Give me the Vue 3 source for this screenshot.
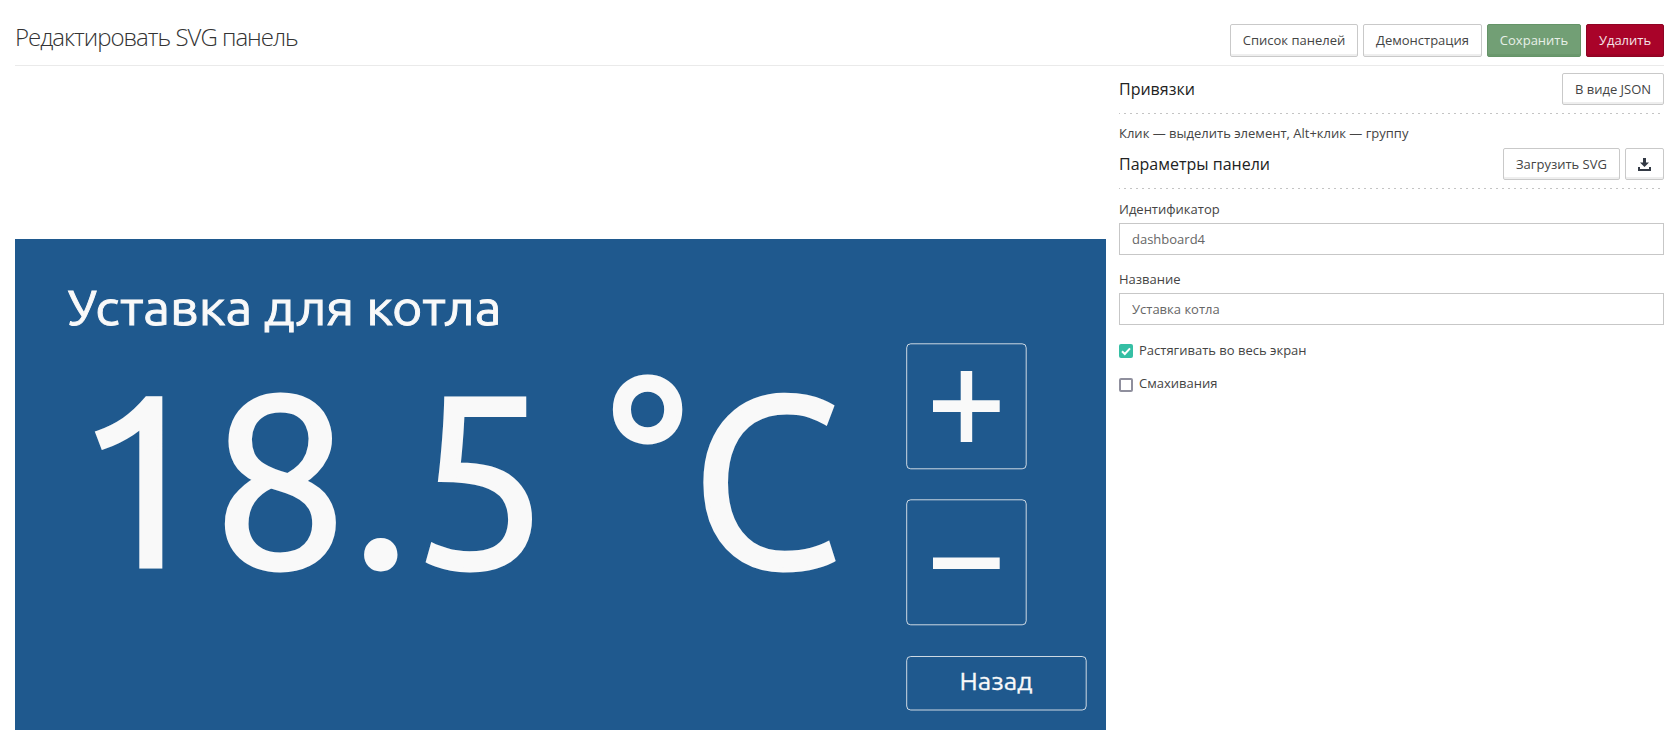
<script setup>
import { ref } from 'vue'

const ident = ref('dashboard4')
const title = ref('Уставка котла')
const stretch = ref(true)
const swipes = ref(false)
</script>

<template>
  <div class="page">
    <header class="header">
      <h1>Редактировать SVG панель</h1>
      <div class="actions">
        <button class="btn w-list">Список панелей</button>
        <button class="btn w-demo">Демонстрация</button>
        <button class="btn save">Сохранить</button>
        <button class="btn danger">Удалить</button>
      </div>
    </header>
    <div class="body">
      <svg class="panel" viewBox="0 0 1091 491" fill="#f9f9f9">
        <rect width="1091" height="491" fill="#1f598e" />
        <text class="ub head" x="52.500" y="85.500" font-size="49" textLength="434" lengthAdjust="spacingAndGlyphs">Уставка для котла</text>
        <text class="ub big" y="326.700" x="58 197 336 397 520 593.500 676" dy="0 0 0 0 0 -2 2" font-size="242">18.5 °C</text>
        <g fill="none" stroke="#f9f9f9" stroke-opacity=".8">
          <rect x="891.7" y="104.8" width="119.5" height="125" rx="4" />
          <rect x="891.7" y="260.8" width="119.5" height="125" rx="4" />
          <rect x="891.7" y="417.5" width="179.500" height="53.500" rx="4" />
        </g>
        <path d="M945.7 132h11.500v29.3h27.5V173h-27.5v30h-11.500v-30H918v-11.7h27.7z" />
        <rect x="918" y="318.5" width="66.700" height="11.5" />
        <text class="ub back" x="944.5" y="451" font-size="24.5" textLength="73" lengthAdjust="spacingAndGlyphs">Назад</text>
      </svg>
      <aside class="side">
        <div class="section">
          <h2>Привязки</h2>
          <button class="btn w-json">В виде JSON</button>
        </div>
        <p class="hint">Клик — выделить элемент, Alt+клик — группу</p>
        <div class="section">
          <h2>Параметры панели</h2>
          <div class="group">
            <button class="btn w-load">Загрузить SVG</button>
            <button class="btn icon" aria-label="download">
              <svg width="13" height="13" viewBox="0 0 13 13" fill="#333a45"><path d="M5 0h3v4.500h3L6.500 9 2 4.500h3zM0 9h2v2h9V9h2v4H0z" /></svg>
            </button>
          </div>
        </div>
        <label class="field"><span>Идентификатор</span><input v-model="ident" type="text" /></label>
        <label class="field"><span>Название</span><input v-model="title" type="text" /></label>
        <label class="check">
          <span class="box" :class="{ on: stretch }"><svg v-if="stretch" viewBox="0 0 14 14"><path d="M3 7.200 5.800 10 11 4.300" fill="none" stroke="#fff" stroke-width="2" /></svg></span>
          <span class="caption">Растягивать во весь экран</span>
        </label>
        <label class="check">
          <span class="box" :class="{ on: swipes }"></span>
          <span class="caption">Смахивания</span>
        </label>
      </aside>
    </div>
  </div>
</template>

<style>
body { background: #fff; }
</style>

<style scoped>
.page { font: 13px/18px "Open Sans", "Noto Sans", sans-serif; color: #444; padding: 0 14px 0 15px; height: 742px; overflow: hidden; box-sizing: border-box; }
.header { display: flex; justify-content: space-between; align-items: flex-start; height: 66px; box-sizing: border-box; border-bottom: 1px solid #eaeaea; }
h1 { margin: 20px 0 0; font-size: 24px; line-height: 34px; font-weight: 300; letter-spacing: -1px; color: #333; }
.actions { display: flex; gap: 5px; margin-top: 24px; }
.actions .btn { height: 33px; padding-bottom: 2px; }
.btn { display: flex; align-items: center; justify-content: center; height: 32px; box-sizing: border-box; padding: 0; margin: 0; font: inherit; color: #444; background: #fff; border: 1px solid #c9c9c9; border-radius: 2px; box-shadow: inset 0 -2px 0 #eee; white-space: nowrap; }
.w-list { width: 128px; }
.w-demo { width: 119px; }
.w-json { width: 102px; }
.w-load { width: 117px; }
.save { width: 94px; color: #e8f0e8; background: #729f75; border-color: #659468; box-shadow: inset 0 -2px 0 #6a986d; }
.danger { width: 78px; color: #f5e4e8; background: #a90329; border-color: #900323; box-shadow: inset 0 -2px 0 #9c0326; }
.body { display: flex; gap: 13px; }
.panel { width: 1091px; height: 491px; margin-top: 173px; display: block; flex: none; }
.ub { font-family: Ubuntu, "Open Sans", "Noto Sans", sans-serif; }
.head { stroke: #f9f9f9; stroke-width: .9px; }
.back { stroke: #f9f9f9; stroke-width: .3px; }
.big { stroke: #f9f9f9; stroke-width: 4.8px; }
.side { flex: 1; padding-top: 7px; }
.section { display: flex; justify-content: space-between; height: 41px; box-sizing: border-box; background: repeating-linear-gradient(90deg, #c4c4c4 0 1px, transparent 1px 5px, #c4c4c4 5px 6px) bottom / 100% 1px no-repeat; }
h2 { margin: 0; font-size: 16px; line-height: 32px; font-weight: 400; color: #222; }
.group { display: flex; gap: 5px; }
.hint { margin: 0; height: 34px; padding-top: 10px; box-sizing: border-box; }
.icon { width: 39px; }
.field { display: block; height: 70px; }
.field span { display: block; height: 34px; line-height: 40px; }
.field input { display: block; width: 100%; height: 32px; box-sizing: border-box; border: 1px solid #c7c7c7; border-radius: 0; padding: 0 12px; margin: 0; font: inherit; color: #666; outline: none; }
.check { display: flex; gap: 6px; height: 34px; padding-top: 15px; box-sizing: border-box; }
.check + .check { height: 30px; }
.box { width: 14px; height: 14px; box-sizing: border-box; border: 2px solid #8f8f9d; border-radius: 2px; flex: none; }
.box.on { border: 0; background: #35bfa4; }
.box svg { display: block; width: 14px; height: 14px; }
.caption { margin-top: -3px; }
.check + .check .caption { margin-top: -4px; }
</style>
